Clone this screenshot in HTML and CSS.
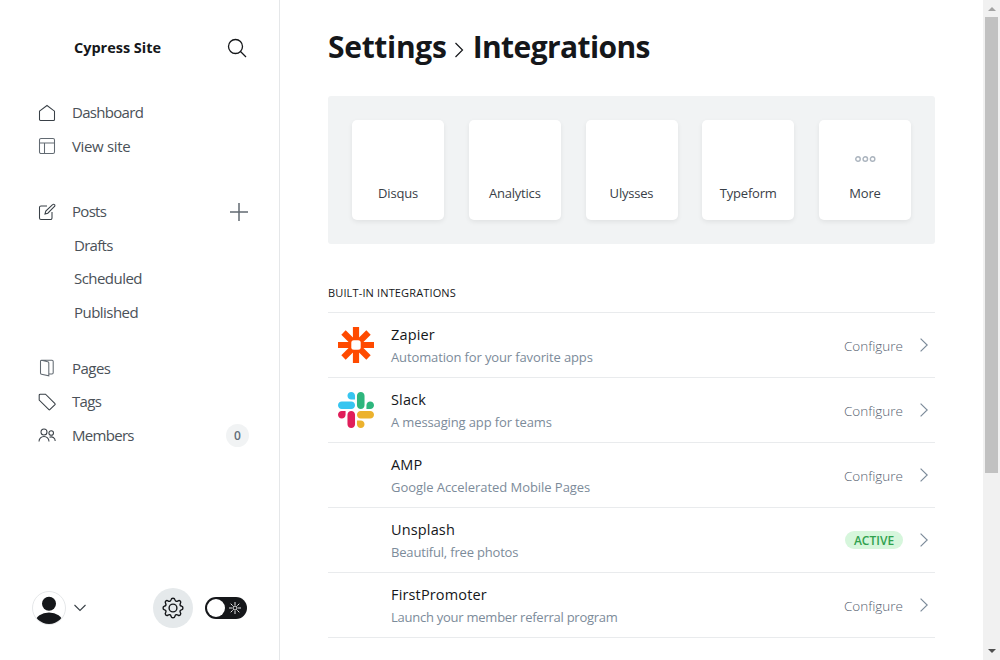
FILE: index.html
```html
<!DOCTYPE html>
<html lang="en">
<head>
<meta charset="utf-8">
<title>Settings - Integrations</title>
<link rel="stylesheet" href="styles.css">
</head>
<body>
<div class="app">
  <nav class="sidebar">
    <header class="site">
      <span class="site-name">Cypress Site</span>
      <svg class="search" viewBox="0 0 20 20"><circle cx="8.5" cy="8.5" r="7"/><path d="M13.5 13.5 19 19"/></svg>
    </header>
    <div class="group">
      <a class="item"><svg class="icon" viewBox="0 0 18 18"><path d="M1.500 7.200 9 1.500l7.500 5.700V15.500a1 1 0 0 1-1 1H2.500a1 1 0 0 1-1-1z"/></svg><span class="tight">Dashboard</span></a>
      <a class="item"><svg class="icon gray" viewBox="0 0 18 18"><rect x="1.500" y="1.500" width="15" height="15" rx="1.500"/><path d="M1.500 6h15M6.500 6v10.500"/></svg><span>View site</span></a>
    </div>
    <div class="group posts">
      <a class="item"><svg class="icon" viewBox="0 0 18 18"><path d="M9 3H3a1.500 1.500 0 0 0-1.500 1.500v10.500a1.500 1.500 0 0 0 1.500 1.500h9.500a1.500 1.500 0 0 0 1.500-1.500V9"/><path d="M7 11l.8-3L14.600 1.600a1.300 1.300 0 0 1 1.900 0 1.300 1.300 0 0 1 0 1.900L9.800 10.200z"/></svg><span class="tight">Posts</span><svg class="plus" viewBox="0 0 18 18"><path d="M9 0v18M0 9h18"/></svg></a>
      <a class="item sub"><span class="tight">Drafts</span></a>
      <a class="item sub"><span class="snug">Scheduled</span></a>
      <a class="item sub"><span class="snug">Published</span></a>
    </div>
    <div class="group manage">
      <a class="item"><svg class="icon gray" viewBox="0 0 18 18"><path d="M3.500 1.200 9.800 2.700a1.200 1.200 0 0 1 1 1.200V16.800L3.500 15.200a1.200 1.200 0 0 1-1-1.200V2a1 1 0 0 1 1-.8h10.500a1.200 1.200 0 0 1 1.200 1.200v11.400a1.200 1.200 0 0 1-1.200 1.200h-3.200"/></svg><span class="snug">Pages</span></a>
      <a class="item"><svg class="icon" viewBox="0 0 18 18"><path d="M1.200 2.200a1 1 0 0 1 1-1H7.500L17 10.700a.6.6 0 0 1 0 .9L11.800 16.700a.6.6 0 0 1-.9 0L1.200 7z"/></svg><span class="tight">Tags</span></a>
      <a class="item"><svg class="icon" viewBox="0 0 18 18"><circle cx="6" cy="6" r="3"/><circle cx="13.200" cy="7" r="2.300"/><path d="M1 15.500a5 5 0 0 1 10 0M11.500 11.300a4 4 0 0 1 5.700 3.700"/></svg><span class="tight">Members</span><b class="count">0</b></a>
    </div>
    <footer class="bottom">
      <svg class="avatar" viewBox="0 0 34 34"><defs><clipPath id="face"><circle cx="17" cy="17" r="16"/></clipPath></defs><circle class="ring" cx="17" cy="17" r="16.500"/><g clip-path="url(#face)"><circle cx="17" cy="12.800" r="7"/><ellipse cx="17" cy="30.500" rx="13.500" ry="9"/></g></svg>
      <svg class="down" viewBox="0 0 12 8"><path d="M.5 1 6 6.500 11.500 1"/></svg>
      <span class="gear"><svg viewBox="-12 -12 24 24"><path d="M-1.900-8.300C-1.500-10.300 1.500-10.300 1.900-8.300 2.300-6.700 3.600-6.200 5-7.100 6.600-8.200 8.500-6.300 7.400-4.700 6.600-3.300 7.100-2.200 8.500-1.900 10.400-1.500 10.400 1.500 8.500 1.900 7.100 2.200 6.600 3.300 7.400 4.700 8.500 6.300 6.600 8.200 5 7.100 3.600 6.200 2.300 6.700 1.900 8.300 1.500 10.300-1.500 10.300-1.900 8.300-2.300 6.700-3.600 6.200-5 7.100-6.600 8.200-8.500 6.300-7.400 4.700-6.600 3.300-7.100 2.200-8.500 1.900-10.400 1.500-10.400-1.500-8.500-1.900-7.100-2.200-6.600-3.300-7.400-4.700-8.500-6.300-6.600-8.200-5-7.100-3.600-6.200-2.300-6.700-1.900-8.300z"/><circle r="3.900"/></svg></span>
      <span class="toggle"><i class="knob"></i><svg viewBox="-6 -6 12 12"><circle r="2"/><path d="M0-6v3M0 3v3M-6 0h3M3 0h3M-4.300-4.300l2 2M2.300 2.300l2 2M-4.300 4.300l2-2M2.300-2.300l2-2"/></svg></span>
    </footer>
  </nav>
  <main class="content">
    <h1 class="title"><span>Settings</span><svg viewBox="0 0 10 16"><path d="M1.500 1 8.500 8l-7 7"/></svg><span class="current">Integrations</span></h1>
    <section class="templates">
      <a class="card">Disqus</a>
      <a class="card">Analytics</a>
      <a class="card">Ulysses</a>
      <a class="card">Typeform</a>
      <a class="card"><svg class="dots" viewBox="0 0 21 6"><circle cx="3" cy="3" r="2.250"/><circle cx="10.300" cy="3" r="2.250"/><circle cx="17.600" cy="3" r="2.250"/></svg>More</a>
    </section>
    <h2 class="heading">Built-in integrations</h2>
    <section class="list">
      <article class="row">
        <svg class="logo" viewBox="-18 -18 36 36"><path d="M0-18V18M-18 0H18M-12.500-12.500l25 25M-12.500 12.500l25-25" stroke="#ff4a00" stroke-width="6.200"/><rect x="-4.700" y="-4.700" width="9.400" height="9.400" rx="2.500" fill="#fff"/></svg>
        <div class="info"><h3>Zapier</h3><p class="medium">Automation for your favorite apps</p></div>
        <span class="configure">Configure</span><svg class="next" viewBox="0 0 8 14"><path d="M.6.6 7.200 7 .6 13.400"/></svg>
      </article>
      <article class="row">
        <svg class="logo" viewBox="0 0 122.800 122.800"><path d="M25.800 77.600c0 7.100-5.800 12.900-12.900 12.900S0 84.700 0 77.600s5.800-12.900 12.900-12.900h12.900zM32.300 77.600c0-7.100 5.800-12.900 12.900-12.900s12.900 5.800 12.900 12.900v32.300c0 7.100-5.800 12.900-12.900 12.900s-12.900-5.800-12.900-12.900z" fill="#e01e5a"/><path d="M45.200 25.800c-7.100 0-12.900-5.800-12.900-12.900S38.100 0 45.200 0s12.900 5.800 12.900 12.900v12.900zM45.200 32.300c7.100 0 12.900 5.800 12.900 12.900s-5.800 12.900-12.900 12.900H12.900C5.800 58.100 0 52.300 0 45.200s5.800-12.900 12.900-12.900z" fill="#36c5f0"/><path d="M97 45.200c0-7.100 5.800-12.900 12.900-12.900s12.900 5.800 12.900 12.900-5.800 12.900-12.900 12.900H97zM90.500 45.200c0 7.100-5.800 12.900-12.900 12.900s-12.900-5.800-12.900-12.900V12.900C64.700 5.800 70.500 0 77.600 0s12.900 5.800 12.900 12.900z" fill="#2eb67d"/><path d="M77.600 97c7.100 0 12.900 5.800 12.900 12.900s-5.800 12.900-12.900 12.900-12.900-5.800-12.900-12.900V97zM77.600 90.500c-7.100 0-12.900-5.800-12.900-12.900s5.800-12.900 12.900-12.900h32.300c7.100 0 12.900 5.800 12.900 12.900s-5.800 12.900-12.900 12.900z" fill="#ecb22e"/></svg>
        <div class="info"><h3>Slack</h3><p class="medium">A messaging app for teams</p></div>
        <span class="configure">Configure</span><svg class="next" viewBox="0 0 8 14"><path d="M.6.6 7.200 7 .6 13.400"/></svg>
      </article>
      <article class="row">
        <span class="logo"></span>
        <div class="info"><h3>AMP</h3><p class="loose">Google Accelerated Mobile Pages</p></div>
        <span class="configure">Configure</span><svg class="next" viewBox="0 0 8 14"><path d="M.6.6 7.200 7 .6 13.400"/></svg>
      </article>
      <article class="row">
        <span class="logo"></span>
        <div class="info"><h3>Unsplash</h3><p>Beautiful, free photos</p></div>
        <span class="active">Active</span><svg class="next" viewBox="0 0 8 14"><path d="M.6.6 7.200 7 .6 13.400"/></svg>
      </article>
      <article class="row">
        <span class="logo"></span>
        <div class="info"><h3>FirstPromoter</h3><p class="close">Launch your member referral program</p></div>
        <span class="configure">Configure</span><svg class="next" viewBox="0 0 8 14"><path d="M.6.6 7.200 7 .6 13.400"/></svg>
      </article>
    </section>
  </main>
  <aside class="scrollbar"><i class="arrow up"></i><i class="thumb"></i><i class="arrow down-arrow"></i></aside>
</div>
</body>
</html>
```
FILE: styles.css
```css
* { box-sizing: border-box; }
body { margin: 0; font-family: "Open Sans", "Noto Sans", sans-serif; color: #15171a; background: #fff; }
h1, h2, h3, p { margin: 0; font-weight: 400; }
svg { display: block; fill: none; flex: none; }
.app { display: flex; width: 1000px; height: 660px; overflow: hidden; }

.sidebar { width: 280px; flex: none; display: flex; flex-direction: column; border-right: 1px solid #e5e7e9; }
.site { height: 95.600px; flex: none; display: flex; justify-content: space-between; padding: 38px 32px 0 74px; }
.site-name { font-size: 14.500px; font-weight: 700; line-height: 20px; letter-spacing: -.02px; }
.search { width: 20px; height: 20px; stroke: #15171a; stroke-width: 1.300; }
.item { display: flex; align-items: center; height: 33.500px; padding: 0 30px 0 38px; font-size: 15px; font-weight: 400; line-height: 20px; color: #4a5158; letter-spacing: -.35px; white-space: nowrap; }
.tight { letter-spacing: -.7px; }
.snug { letter-spacing: -.54px; }
.icon { width: 18px; height: 18px; margin: 1px 16px 0 0; stroke: #394047; stroke-width: 1.050; }
.icon.gray { stroke: #626a72; }
.plus { width: 18px; height: 18px; margin: 1px 1px 0 auto; stroke: #626a72; stroke-width: 1.500; }
.posts { margin-top: 32px; }
.manage { margin-top: 22.400px; }
.sub { padding-left: 74px; }
.count { width: 23px; height: 23px; margin: 2px 0 0 auto; border-radius: 50%; background: #f1f3f4; color: #626d79; font-size: 12px; font-weight: 600; line-height: 24px; text-align: center; letter-spacing: 0; }
.bottom { display: flex; align-items: center; height: 40px; margin: auto 32px 32px 32px; }
.avatar { width: 34px; height: 34px; fill: #15171a; }
.ring { fill: #fff; stroke: #e5e7e9; }
.down { width: 12px; height: 8px; margin-left: 8px; stroke: #394047; stroke-width: 1.100; }
.gear { display: grid; place-items: center; width: 40px; height: 40px; margin-left: 67px; border-radius: 50%; background: #e5e9eb; }
.gear svg { width: 24px; height: 24px; stroke: #15171a; stroke-width: 1.400; }
.toggle { display: flex; align-items: center; justify-content: space-between; width: 42px; height: 22px; margin-left: 12px; padding: 0 6px 0 2px; border-radius: 11px; background: #15171a; }
.knob { width: 18px; height: 18px; border-radius: 50%; background: #fff; }
.toggle svg { width: 12px; height: 12px; stroke: #fff; stroke-width: .9; }

.content { flex: 1; padding: 0 48px; }
.title { display: flex; align-items: center; height: 96px; padding-bottom: 3px; font-size: 30px; font-weight: 700; line-height: 40px; letter-spacing: -.3px; white-space: nowrap; }
.title svg { width: 10px; height: 16px; margin: 6px 9px 0 7px; stroke: #15171a; stroke-width: 1.200; }
.current { letter-spacing: -.600px; }
.templates { display: flex; justify-content: space-between; height: 148px; padding: 24px; border-radius: 3px; background: #f1f3f4; }
.card { display: flex; flex-direction: column; align-items: center; justify-content: flex-end; width: 92px; height: 100px; padding-bottom: 17px; border-radius: 5px; background: #fff; box-shadow: 0 2px 5px rgba(0, 0, 0, .07); font-size: 13px; line-height: 20px; color: #394047; letter-spacing: -.2px; }
.dots { width: 21px; height: 6px; margin-bottom: 21px; stroke: #abb4be; stroke-width: 1.400; }
.heading { height: 68px; padding-top: 39px; font-size: 11px; line-height: 20px; text-transform: uppercase; letter-spacing: .14px; }
.row { display: flex; align-items: center; height: 65px; padding: 0 7px 0 10px; border-top: 1px solid #e9ebed; }
.row:last-child { height: 66px; border-bottom: 1px solid #e9ebed; }
.logo { width: 36px; height: 36px; flex: none; margin-right: 17px; }
.info { flex: 1; white-space: nowrap; }
.info h3 { padding-top: 1px; font-size: 14.500px; font-weight: 500; line-height: 22px; letter-spacing: .15px; }
.info p { font-size: 13px; line-height: 22px; color: #7c8b9a; letter-spacing: -.18px; }
.info .medium { letter-spacing: -.13px; }
.info .loose { letter-spacing: -.05px; }
.info .close { letter-spacing: -.25px; }
.configure { padding-top: 1px; font-size: 13.500px; font-weight: 300; line-height: 20px; color: #566270; letter-spacing: 0; }
.active { width: 58px; height: 18px; border-radius: 9px; background: #d6f6dc; color: #30a14e; font-size: 12px; font-weight: 600; line-height: 19px; text-align: center; text-transform: uppercase; }
.next { width: 8px; height: 14px; margin-left: 17px; stroke: #7c8b9a; stroke-width: 1.200; }

.scrollbar { display: flex; flex-direction: column; align-items: center; width: 17px; height: 660px; flex: none; background: #f1f1f1; }
.arrow { width: 0; height: 0; border: 4px solid transparent; }
.up { margin: 3px 0 6px; border-bottom-color: #a3a3a3; }
.thumb { width: 13px; height: 456px; background: #c1c1c1; }
.down-arrow { margin: auto 0 3px; border-top-color: #505050; }
```
